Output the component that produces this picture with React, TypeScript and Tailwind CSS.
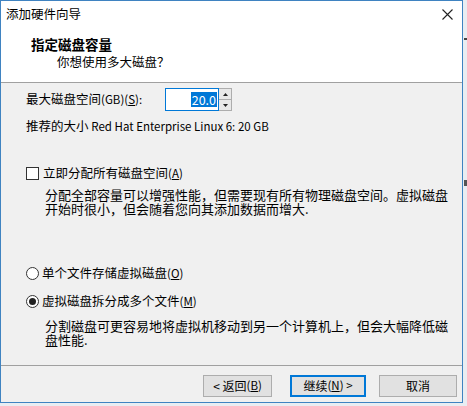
import React from "react";

const font = { fontFamily: '"Noto Sans CJK SC", "Noto Sans", sans-serif' };

function Btn({ children, w, focus }: { children: React.ReactNode; w: string; focus?: boolean }) {
  return (
    <div
      className={`${w} h-[22px] flex items-center justify-center bg-[#e1e1e1] text-[12px] text-black ${
        focus ? "border-2 border-[#0078d7]" : "border border-[#adadad]"
      }`}
    >
      {children}
    </div>
  );
}

export default function App() {
  return (
    <div className="w-[467px] h-[406px] bg-[#e9edf2] relative overflow-hidden" style={font}>
      <div className="absolute left-[464px] top-[38px] w-[3px] h-[2px] bg-[#444]" />
      <div className="absolute left-[464px] top-[180px] w-[3px] h-[6px] bg-[#555]" />
      <div className="w-[463px] h-[403px] border border-[#3f83c1] flex flex-col bg-[#f0f0f0]">
        {/* Title bar */}
        <div className="h-[27px] bg-white flex items-center justify-between pl-[5px] pr-[9px] shrink-0">
          <span className="text-[12.5px] text-black leading-none">添加硬件向导</span>
          <svg width="11" height="11" viewBox="0 0 11 11">
            <path d="M0.5 0.5 L10.5 10.5 M10.5 0.5 L0.5 10.5" stroke="#222" strokeWidth="1.1" />
          </svg>
        </div>
        {/* Header */}
        <div className="h-[55px] bg-white border-b border-[#a0a0a0] shrink-0 flex flex-col pt-[8px]">
          <div className="pl-[30px] text-[13.5px] font-bold leading-[17px] text-black">指定磁盘容量</div>
          <div className="pl-[56px] text-[12.5px] leading-[17px] text-black">你想使用多大磁盘？</div>
        </div>
        {/* Body */}
        <div className="flex-1 flex flex-col pl-[25px] pt-[5px] text-[12.5px] text-black">
          <div className="flex items-center h-[23px]">
            <span className="w-[139px]">
              最大磁盘空间<span className="text-[11.5px]">(GB)(<span className="underline">S</span>):</span>
            </span>
            <div className="flex h-[23px]">
              <div className="w-[54px] h-[23px] border border-[#0078d7] bg-white flex items-center justify-end pr-[1px]">
                <span className="bg-[#0078d7] text-white leading-[15px] px-[1px]">20.0</span>
              </div>
              <div className="w-[13px] h-[23px] flex flex-col border border-[#adadad] border-l-0">
                <div className="flex-1 bg-[#e8e8e8] border-b border-[#adadad] flex items-center justify-center">
                  <svg width="5" height="3" viewBox="0 0 5 3"><path d="M2.5 0 L5 3 L0 3 Z" fill="#222" /></svg>
                </div>
                <div className="flex-1 bg-[#e8e8e8] flex items-center justify-center">
                  <svg width="5" height="3" viewBox="0 0 5 3"><path d="M0 0 L5 0 L2.5 3 Z" fill="#222" /></svg>
                </div>
              </div>
            </div>
          </div>
          <div className="mt-[8px] leading-[14px]">
            推荐的大小 <span className="text-[11.5px]">Red Hat Enterprise Linux 6: 20 GB</span>
          </div>

          <div className="mt-[33px] flex items-center h-[14px]">
            <div className="w-[13px] h-[13px] border border-[#333] bg-white mr-[4px]" />
            <span>
              立即分配所有磁盘空间<span className="text-[11.5px]">(<span className="underline">A</span>)</span>
            </span>
          </div>
          <div className="mt-[8px] pl-[19px] pr-[10px] leading-[14px] text-[13px]">
            <div className="h-[14px]">分配全部容量可以增强性能，但需要现有所有物理磁盘空间。虚拟磁盘</div>
            <div className="h-[14px]">开始时很小，但会随着您向其添加数据而增大.</div>
          </div>

          <div className="mt-[50px] flex items-center h-[14px]">
            <div className="w-[13px] h-[13px] rounded-full border border-[#333] bg-white mr-[3px]" />
            <span>
              单个文件存储虚拟磁盘<span className="text-[11.5px]">(<span className="underline">O</span>)</span>
            </span>
          </div>
          <div className="mt-[14px] flex items-center h-[14px]">
            <div className="w-[13px] h-[13px] rounded-full border border-[#333] bg-white mr-[3px] flex items-center justify-center">
              <div className="w-[7px] h-[7px] rounded-full bg-[#222]" />
            </div>
            <span>
              虚拟磁盘拆分成多个文件<span className="text-[11.5px]">(<span className="underline">M</span>)</span>
            </span>
          </div>
          <div className="mt-[11px] pl-[19px] pr-[10px] leading-[14px] text-[13px]">
            <div className="h-[14px]">分割磁盘可更容易地将虚拟机移动到另一个计算机上，但会大幅降低磁</div>
            <div className="h-[14px]">盘性能.</div>
          </div>
        </div>
        {/* Footer */}
        <div className="h-[37px] border-t border-[#a0a0a0] shrink-0 flex items-start justify-end pt-[9px] pr-[5px]">
          <Btn w="w-[69px]">
            &lt; 返回<span className="text-[11.5px]">(<span className="underline">B</span>)</span>
          </Btn>
          <div className="w-[18px]" />
          <Btn w="w-[76px]" focus>
            继续<span className="text-[11.5px]">(<span className="underline">N</span>) &gt;</span>
          </Btn>
          <div className="w-[13px]" />
          <Btn w="w-[78px]">取消</Btn>
        </div>
      </div>
    </div>
  );
}
